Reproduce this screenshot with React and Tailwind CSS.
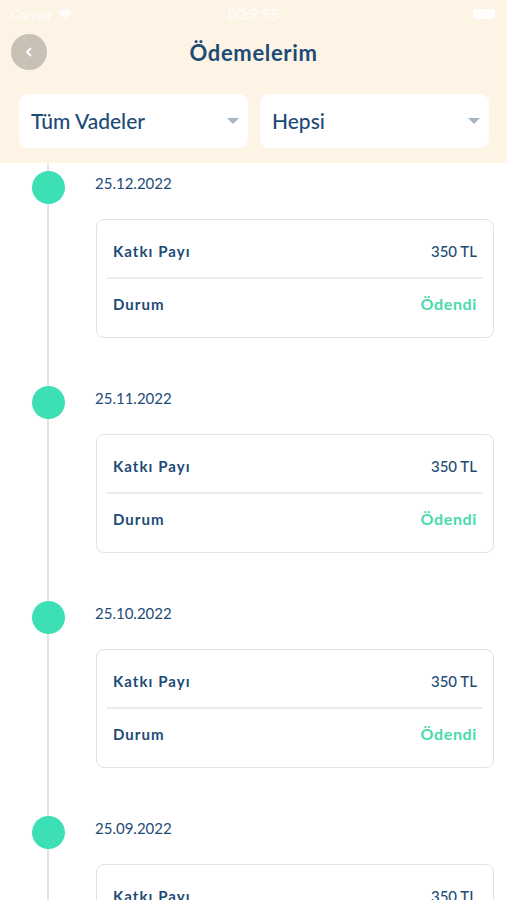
import React from "react";

const items = ["25.12.2022", "25.11.2022", "25.10.2022", "25.09.2022"];

function Caret() {
  return (
    <svg width="12" height="6" viewBox="0 0 12 6" className="shrink-0">
      <path d="M0 0 L12 0 L6 6 Z" fill="#a7b4c4" />
    </svg>
  );
}

function Dropdown({ label }) {
  return (
    <div className="flex-1 h-[54px] bg-white rounded-[9px] flex items-center justify-between pl-[12px] pr-[9px]">
      <span className="text-[21px] text-[#1d4b76] font-medium">{label}</span>
      <Caret />
    </div>
  );
}

function Item({ date }) {
  return (
    <div className="flex h-[215px]">
      <div className="w-[95px] shrink-0 relative">
        <div className="absolute left-[47px] top-0 bottom-0 w-[2px] bg-[#e3e3e3]" />
        <div className="absolute left-[32px] top-[8px] w-[33px] h-[33px] rounded-full bg-[#3de0b5]" />
      </div>
      <div className="flex-1 pr-[13px] pt-[8px]">
        <div className="h-[24px] flex items-center text-[15px] text-[#1d4b76]">{date}</div>
        <div className="mt-[24px] ml-[1px] border border-[#e2e2e2] rounded-[8px] px-[10px] pt-[5px] pb-[6px] bg-white">
          <div className="h-[52px] flex items-center justify-between px-[6px]">
            <span className="text-[15px] font-bold tracking-[0.07em] text-[#1d4b76]">Katkı Payı</span>
            <span className="text-[15px] text-[#1d4b76] font-medium">350 TL</span>
          </div>
          <div className="h-[2px] bg-[#ececec]" />
          <div className="h-[52px] flex items-center justify-between px-[6px] pb-[2px]">
            <span className="text-[15px] font-bold tracking-[0.07em] text-[#1d4b76]">Durum</span>
            <span className="text-[16px] font-bold tracking-[0.04em] text-[#46dbac]">Ödendi</span>
          </div>
        </div>
      </div>
    </div>
  );
}

export default function App() {
  return (
    <div className="w-[507px] h-[900px] overflow-hidden bg-white" style={{ fontFamily: "Lato, 'Noto Sans', sans-serif" }}>
      <div className="bg-[#fdf4e6]">
        <div className="h-[28px] flex items-center justify-between px-[10px] text-white/80 text-[14px]">
          <div className="flex items-center gap-[6px] w-[100px]">
            <span>Carrier</span>
            <svg width="14" height="10" viewBox="0 0 14 10"><path d="M7 10 L0 3 A10 10 0 0 1 14 3 Z" fill="white" fillOpacity="0.8" /></svg>
          </div>
          <span className="text-[15px]">00:9:55</span>
          <div className="w-[100px] flex justify-end pr-[2px]">
            <div className="w-[22px] h-[10px] bg-white/90 rounded-[2px]" />
          </div>
        </div>
        <div className="relative h-[50px] flex items-center justify-center">
          <div className="absolute left-[11px] top-[6px] w-[36px] h-[36px] rounded-full bg-[#c8c1b6] flex items-center justify-center">
            <svg width="12" height="12" viewBox="0 0 12 12"><path d="M7.5 2.5 L4 6 L7.5 9.5" stroke="white" strokeWidth="1.8" fill="none" strokeLinecap="round" strokeLinejoin="round" /></svg>
          </div>
          <span className="text-[22px] font-bold text-[#1d4b76] tracking-[0.03em] -mt-[2px]">Ödemelerim</span>
        </div>
        <div className="flex gap-[12px] px-[19px] pt-[16px] pb-[15px] pr-[18px]">
          <Dropdown label="Tüm Vadeler" />
          <Dropdown label="Hepsi" />
        </div>
      </div>
      <div>
        {items.map((d) => (
          <Item key={d} date={d} />
        ))}
      </div>
    </div>
  );
}
